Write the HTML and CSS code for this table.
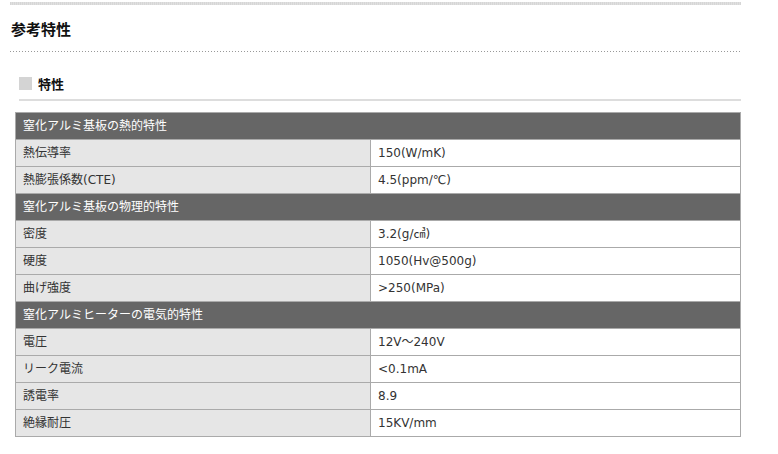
FILE: index.html
```html
<!DOCTYPE html>
<html lang="ja">
<head>
<meta charset="utf-8">
<title>参考特性</title>
<link rel="stylesheet" href="styles.css">
</head>
<body>
<div class="page">
  <div class="topbar"></div>
  <h2 class="title">参考特性</h2>
  <div class="dots"></div>
  <h3 class="sub"><span class="sq"></span>特性</h3>
  <table class="spec">
    <colgroup><col class="c1"><col class="c2"></colgroup>
    <tr><th colspan="2">窒化アルミ基板の熱的特性</th></tr>
    <tr><td class="lb">熱伝導率</td><td>150(W/mK)</td></tr>
    <tr><td class="lb">熱膨張係数(CTE)</td><td>4.5(ppm/℃)</td></tr>
    <tr><th colspan="2">窒化アルミ基板の物理的特性</th></tr>
    <tr><td class="lb">密度</td><td>3.2(g/㎤)</td></tr>
    <tr><td class="lb">硬度</td><td>1050(Hv@500g)</td></tr>
    <tr><td class="lb">曲げ強度</td><td>&gt;250(MPa)</td></tr>
    <tr><th colspan="2">窒化アルミヒーターの電気的特性</th></tr>
    <tr><td class="lb">電圧</td><td>12V～240V</td></tr>
    <tr><td class="lb">リーク電流</td><td>&lt;0.1mA</td></tr>
    <tr><td class="lb">誘電率</td><td>8.9</td></tr>
    <tr><td class="lb">絶縁耐圧</td><td>15KV/mm</td></tr>
  </table>
</div>
</body>
</html>
```

FILE: styles.css
```css
html, body {
  margin: 0;
  padding: 0;
  background: #fff;
}
body {
  font-family: "DejaVu Sans", "Noto Sans CJK JP", sans-serif;
  color: #333;
}
.page {
  width: 731px;
  margin-left: 10px;
  padding-top: 2px;
}
.topbar {
  height: 3px;
  background: repeating-linear-gradient(to right, #d6d6d6 0 1px, #e0e0e0 1px 2px);
}
.title {
  margin: 14px 0 12px 1px;
  font-family: "Noto Sans CJK JP", sans-serif;
  font-size: 15px;
  font-weight: bold;
  line-height: 20px;
  color: #111;
}
.dots {
  height: 1px;
  background: repeating-linear-gradient(to right, #999 0 1px, transparent 1px 3px);
}
.sub {
  display: flex;
  align-items: center;
  gap: 6px;
  margin: 0 0 0 9px;
  padding: 25px 0 9px;
  border-bottom: 2px solid #ddd;
  font-family: "Noto Sans CJK JP", sans-serif;
  font-size: 13px;
  font-weight: bold;
  line-height: 13px;
  color: #111;
}
.sq {
  width: 13px;
  height: 13px;
  background: #d4d4d4;
}
.spec {
  margin: 11px 0 0 5px;
  width: 726px;
  table-layout: fixed;
  border-collapse: separate;
  border-spacing: 0;
  border-top: 1px solid #aaa;
  border-left: 1px solid #aaa;
  font-size: 12px;
}
.c1 { width: 355px; }
.c2 { width: 370px; }
.spec th,
.spec td {
  height: 26px;
  padding: 0 7px;
  line-height: 26px;
  border-right: 1px solid #aaa;
  border-bottom: 1px solid #aaa;
  text-align: left;
  font-weight: normal;
  white-space: nowrap;
}
.spec th {
  background: #666;
  color: #fff;
}
.spec td.lb {
  background: #e6e6e6;
}
.spec td {
  background: #fff;
}
```
